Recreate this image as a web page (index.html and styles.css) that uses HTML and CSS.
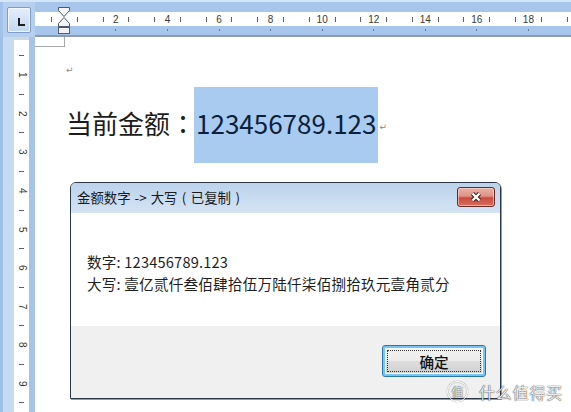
FILE: index.html
```html
<!DOCTYPE html>
<html lang="zh-CN">
<head>
<meta charset="utf-8">
<title>金额数字</title>
<link rel="stylesheet" href="styles.css">
</head>
<body>
<div class="app">
  <div class="corner"><div class="tabsel"><span class="tab-l"></span></div></div>

  <div class="hruler">
    <div class="hstrip">
      <span class="c t"></span><span class="c"></span>
      <span class="c t"></span><span class="c"></span><span class="c t"></span><span class="c n">2</span>
      <span class="c t"></span><span class="c"></span><span class="c t"></span><span class="c n">4</span>
      <span class="c t"></span><span class="c"></span><span class="c t"></span><span class="c n">6</span>
      <span class="c t"></span><span class="c"></span><span class="c t"></span><span class="c n">8</span>
      <span class="c t"></span><span class="c"></span><span class="c t"></span><span class="c n">10</span>
      <span class="c t"></span><span class="c"></span><span class="c t"></span><span class="c n">12</span>
      <span class="c t"></span><span class="c"></span><span class="c t"></span><span class="c n">14</span>
      <span class="c t"></span><span class="c"></span><span class="c t"></span><span class="c n">16</span>
      <span class="c t"></span><span class="c"></span><span class="c t"></span><span class="c n">18</span>
      <span class="c t"></span><span class="c"></span><span class="c t"></span>
    </div>
    <svg class="indent" width="14" height="29" viewBox="0 0 14 29">
      <path d="M1.5 1.5h11v3l-5.5 6-5.5-6z"/>
      <path d="M7 11.5l5.5 6v3h-11v-3z"/>
      <rect x="1.5" y="21.5" width="11" height="6"/>
    </svg>
  </div>

  <div class="vrail">
    <div class="vr-out"></div>
    <div class="vr-strip">
      <div class="vr-margin"></div>
      <div class="vc t"></div>
      <div class="vc"><span class="vn">1</span></div>
      <div class="vc t"></div>
      <div class="vc"><span class="vn">2</span></div>
      <div class="vc t"></div>
      <div class="vc"><span class="vn">3</span></div>
      <div class="vc t"></div>
      <div class="vc"><span class="vn">4</span></div>
      <div class="vc t"></div>
      <div class="vc"><span class="vn">5</span></div>
      <div class="vc t"></div>
      <div class="vc"><span class="vn">6</span></div>
      <div class="vc t"></div>
      <div class="vc"><span class="vn">7</span></div>
      <div class="vc t"></div>
      <div class="vc"><span class="vn">8</span></div>
      <div class="vc t"></div>
      <div class="vc"><span class="vn">9</span></div>
      <div class="vc t"></div>
    </div>
    <div class="vr-in"></div>
  </div>

  <div class="page">
    <div class="cropmark"></div>
    <p class="para p1"><span class="pm">↵</span></p>
    <p class="para p2"><span class="cn">当前金额<span class="punct" lang="zh-TW">：</span></span><span class="hl">123456789.123</span><span class="pm pm2">↵</span></p>

    <div class="dialog">
      <div class="titlebar">
        <span class="title">金额数字 -&gt; 大写<span class="paren">(</span>已复制<span class="paren">)</span></span>
        <span class="close">
          <svg width="14" height="12" viewBox="0 0 14 12">
            <path class="x-out" d="M3.5 2.5L10.5 9.5M10.5 2.5L3.5 9.5"/>
            <path class="x-in" d="M3.5 2.5L10.5 9.5M10.5 2.5L3.5 9.5"/>
          </svg>
        </span>
      </div>
      <div class="client">
        <p class="msg">数字: 123456789.123</p>
        <p class="msg">大写: 壹亿贰仟叁佰肆拾伍万陆仟柒佰捌拾玖元壹角贰分</p>
      </div>
      <div class="footer"><button class="ok">确定</button></div>
    </div>
  </div>

  <div class="watermark"><span class="wm-circle">值</span><span class="wm-text">什么值得买</span></div>
</div>
</body>
</html>
```
FILE: styles.css
```css
html, body {
  margin: 0;
  padding: 0;
  background: #fff;
}

.app {
  position: relative;
  width: 571px;
  height: 412px;
  overflow: hidden;
  display: grid;
  grid-template-columns: 35px 1fr;
  grid-template-rows: 37px 1fr;
  font-family: "Noto Sans CJK SC", "Liberation Sans", sans-serif;
}

.punct {
  font-family: "Noto Sans CJK TC", "Noto Sans CJK SC", sans-serif;
}

/* ---------- corner / tab selector ---------- */
.corner {
  background: linear-gradient(to right, #a3c1e9 0 3px, #b6cfef 3px);
  border-top: 2px solid #d3e7f8;
  box-sizing: border-box;
}
.tabsel {
  margin: 5px 0 0 7px;
  width: 24px;
  height: 26px;
  box-sizing: border-box;
  border: 1px solid #7d9cc6;
  border-radius: 2px;
  background: linear-gradient(#e6eefa, #c3d7f1);
  box-shadow: inset 0 0 0 1px #f3f7fd;
  display: flex;
  align-items: center;
  justify-content: center;
}
.tab-l {
  width: 5px;
  height: 6px;
  margin: 3px 0 0 4px;
  border-left: 2px solid #1f1f1f;
  border-bottom: 2px solid #1f1f1f;
}

/* ---------- horizontal ruler ---------- */
.hruler {
  position: relative;
  background: #a8c5eb;
  border-top: 2px solid #d3e7f8;
  border-bottom: 2px solid #8f9bab;
  box-sizing: border-box;
  padding-top: 10px;
}
.hstrip {
  height: 14px;
  background: #fff;
  display: flex;
  padding-left: 10px;
}
.c {
  flex: 0 0 12.9px;
  position: relative;
  display: flex;
  align-items: center;
  justify-content: center;
  font-family: "Liberation Sans", sans-serif;
  font-size: 10px;
  color: #3a3a3a;
  white-space: nowrap;
}
.c.t::before {
  content: "";
  width: 1px;
  height: 5px;
  background: #606060;
}
.c.n::after {
  content: "";
  position: absolute;
  left: 6px;
  top: 17px;
  width: 1px;
  height: 2px;
  background: #6b7c94;
}
.indent {
  position: absolute;
  left: 22px;
  top: 4px;
}
.indent path, .indent rect {
  fill: #f2f4f7;
  stroke: #4f5864;
  stroke-width: 1;
}

/* ---------- vertical ruler ---------- */
.vrail {
  display: flex;
}
.vr-out {
  width: 14px;
  background: linear-gradient(to right, #a0bfe8 0 3px, #c6daf3 3px);
}
.vr-strip {
  width: 15px;
  background: #fff;
  display: flex;
  flex-direction: column;
}
.vr-in {
  width: 6px;
  background: #a6c3ea;
}
.vr-margin {
  flex: 0 0 9px;
  box-sizing: border-box;
  border-top: 3px solid #cfd7e2;
}
.vc {
  flex: 0 0 19.3px;
  display: flex;
  align-items: center;
  justify-content: center;
}
.vc.t::before {
  content: "";
  width: 5px;
  height: 1px;
  background: #606060;
}
.vn {
  writing-mode: vertical-rl;
  font-family: "Liberation Sans", sans-serif;
  font-size: 10px;
  line-height: 10px;
  color: #3a3a3a;
}

/* ---------- page ---------- */
.page {
  position: relative;
  background: #fff;
}
.cropmark {
  width: 29px;
  height: 9px;
  border-right: 1px solid #a8a8a8;
  border-bottom: 1px solid #a8a8a8;
}
.para {
  margin: 0 0 0 29px;
  display: flex;
  align-items: center;
}
.pm {
  font-family: "DejaVu Sans", sans-serif;
  font-size: 9px;
  color: #8a8a8a;
}
.p1 {
  height: 40px;
  padding: 6px 0 0 2px;
  box-sizing: border-box;
}
.p2 {
  height: 76px;
  padding-left: 2px;
  font-size: 26px;
  color: #1c1c1c;
}
.cn {
  padding-bottom: 6px;
}
.hl {
  align-self: stretch;
  display: flex;
  align-items: center;
  box-sizing: border-box;
  padding: 0 2px 6px 2px;
  margin-left: -2px;
  background: #a9cbf0;
  color: #0c1f3d;
}
.pm2 {
  margin-left: 1px;
  padding-top: 4px;
}

/* ---------- dialog ---------- */
.dialog {
  position: absolute;
  left: 35px;
  top: 145px;
  width: 431px;
  height: 217px;
  box-sizing: border-box;
  border: 1px solid #2b3848;
  border-radius: 6px 6px 0 0;
  box-shadow: 1px 1px 0 #4db4de;
  display: flex;
  flex-direction: column;
  overflow: hidden;
  font-size: 14.6px;
  color: #1e1e1e;
}
.titlebar {
  flex: 0 0 30px;
  display: flex;
  align-items: flex-start;
  padding: 0 5px 0 6px;
  background: linear-gradient(#bcd3ec, #d4e3f4);
}
.title {
  font-size: 13.4px;
  line-height: 27px;
  padding-top: 1px;
  color: #1a1a1a;
  white-space: nowrap;
  word-spacing: 1px;
}
.paren {
  display: inline-block;
  width: 1em;
  text-align: center;
}
.close {
  margin-left: auto;
  margin-top: 4px;
  width: 38px;
  height: 20px;
  box-sizing: border-box;
  border: 1px solid #6a2b25;
  border-radius: 3px;
  background: linear-gradient(#eab0a7 0%, #de9387 45%, #c84a3c 55%, #d6705f 100%);
  box-shadow: inset 0 0 0 1px rgba(255, 220, 210, 0.6);
  display: flex;
  align-items: center;
  justify-content: center;
}
.x-out {
  stroke: #4a1d18;
  stroke-width: 4.4;
  fill: none;
}
.x-in {
  stroke: #fff;
  stroke-width: 2.4;
  fill: none;
}
.client {
  flex: 0 0 113px;
  box-sizing: border-box;
  background: #fff;
  padding: 38px 0 0 16px;
}
.msg {
  margin: 0;
  line-height: 22px;
  white-space: nowrap;
  letter-spacing: 0.2px;
}
.footer {
  flex: 1;
  background: #f0f0f0;
  display: flex;
  justify-content: flex-end;
  align-items: flex-start;
  padding: 19px 14px 0 0;
}
.ok {
  position: relative;
  width: 104px;
  height: 32px;
  box-sizing: border-box;
  margin: 0;
  padding: 0;
  border: 1px solid #2b76b0;
  border-radius: 3px;
  background: linear-gradient(#f4f4f4, #ebebeb 48%, #dcdcdc 52%, #cfcfcf);
  box-shadow: inset 0 0 0 2px #78c6f0, inset 0 0 0 3px #f7fbfe;
  font-family: "Noto Sans CJK SC", sans-serif;
  font-size: 14.6px;
  font-weight: 500;
  color: #111;
}
.ok::after {
  content: "";
  position: absolute;
  left: 4px;
  top: 4px;
  right: 4px;
  bottom: 4px;
  border: 1px dotted #333;
}

/* ---------- watermark ---------- */
.watermark {
  position: absolute;
  left: 447px;
  top: 381px;
  display: flex;
  align-items: center;
  gap: 11px;
  color: rgba(255, 255, 255, 0.92);
  text-shadow: 0 0 1px rgba(0, 0, 0, 0.85), 0 0 1px rgba(0, 0, 0, 0.5);
}
.wm-circle {
  width: 21px;
  height: 21px;
  box-sizing: border-box;
  border: 1.5px solid rgba(255, 255, 255, 0.92);
  border-radius: 50%;
  box-shadow: 0 0 1px rgba(0, 0, 0, 0.7), inset 0 0 1px rgba(0, 0, 0, 0.7);
  display: flex;
  align-items: center;
  justify-content: center;
  font-size: 12px;
  line-height: 1;
}
.wm-text {
  font-size: 16px;
  letter-spacing: 0.8px;
  line-height: 20px;
}
```
